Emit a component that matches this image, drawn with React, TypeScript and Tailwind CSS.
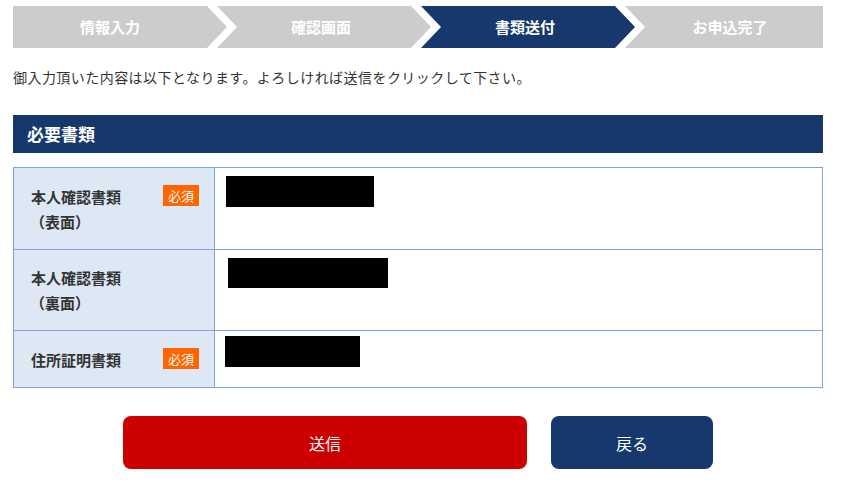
import React from 'react'

const steps = ['情報入力', '確認画面', '書類送付', 'お申込完了']

const rows = [
  { label: ['本人確認書類', '（表面）'], required: true, pad: 'pt-[16px] pb-[15px]', box: 'ml-[11px] mt-[8px] w-[148px] h-[31px]' },
  { label: ['本人確認書類', '（裏面）'], required: false, pad: 'pt-[15px] pb-[15px]', box: 'ml-[13px] mt-[8px] w-[160px] h-[30px]' },
  { label: ['住所証明書類'], required: true, pad: 'pt-[16px] pb-[15px]', box: 'ml-[10px] mt-[5px] w-[135px] h-[31px]' },
]

const Steps = () => {
  return (
    <div className="flex h-[42px] mt-[6px]">
      {steps.map((s, i) => {
        const first = i === 0
        const last = i === steps.length - 1
        const clip = first
          ? 'polygon(0 0, calc(100% - 20px) 0, 100% 50%, calc(100% - 20px) 100%, 0 100%)'
          : last
          ? 'polygon(0 0, 100% 0, 100% 100%, 0 100%, 20px 50%)'
          : 'polygon(0 0, calc(100% - 20px) 0, 100% 50%, calc(100% - 20px) 100%, 0 100%, 20px 50%)'
        return (
          <div
            key={s}
            style={{ clipPath: clip }}
            className={`flex items-center justify-center text-[15px] font-bold text-white ${
              i === 2 ? 'bg-[#16386c]' : 'bg-[#cccccc]'
            } ${first ? 'w-[214px] pr-[20px]' : last ? 'w-[198px] -ml-[10px] pl-[12px]' : 'w-[214px] -ml-[10px] pr-[6px]'}`}
          >
            {s}
          </div>
        )
      })}
    </div>
  )
}

export default function App() {
  return (
    <div className="w-[841px] h-[483px] bg-white text-[#333333] font-['Noto_Sans_CJK_JP','Noto_Sans',sans-serif] overflow-hidden">
      <div className="mx-[13px] w-[810px]">
        <Steps />

        <p className="mt-[19px] text-[14px] leading-[20px] tracking-[0.45px] text-[#333333]">
          御入力頂いた内容は以下となります。よろしければ送信をクリックして下さい。
        </p>

        <div className="mt-[28px] h-[38px] bg-[#16386c] flex items-center pl-[14px] text-[17px] font-bold text-white">
          必要書類
        </div>

        <div className="mt-[14px] border border-[#7ea6dc]">
          {rows.map((r, i) => (
            <div key={i} className={`flex ${i > 0 ? 'border-t border-[#7ea6dc]' : ''}`}>
              <div className={`w-[201px] shrink-0 bg-[#dde8f4] border-r border-[#7ea6dc] pl-[17px] pr-[15px] ${r.pad} flex justify-between items-start`}>
                <div className="text-[15px] font-bold leading-[25px] text-[#333333]">
                  {r.label.map((l) => (
                    <div key={l} className={l.startsWith('（') ? '-ml-[1px]' : ''}>
                      {l}
                    </div>
                  ))}
                </div>
                {r.required && (
                  <span className="mt-[1px] w-[36px] h-[21px] bg-[#ff6600] text-white text-[13px] leading-[21px] text-center">
                    必須
                  </span>
                )}
              </div>
              <div className="flex-1 bg-white">
                <div className={`bg-black ${r.box}`} />
              </div>
            </div>
          ))}
        </div>

        <div className="mt-[28px] flex justify-center gap-[24px]">
          <button className="w-[404px] h-[53px] rounded-[8px] bg-[#cc0000] text-white text-[16px]">
            送信
          </button>
          <button className="w-[162px] h-[53px] rounded-[8px] bg-[#16386c] text-white text-[16px]">
            戻る
          </button>
        </div>
      </div>
    </div>
  )
}
